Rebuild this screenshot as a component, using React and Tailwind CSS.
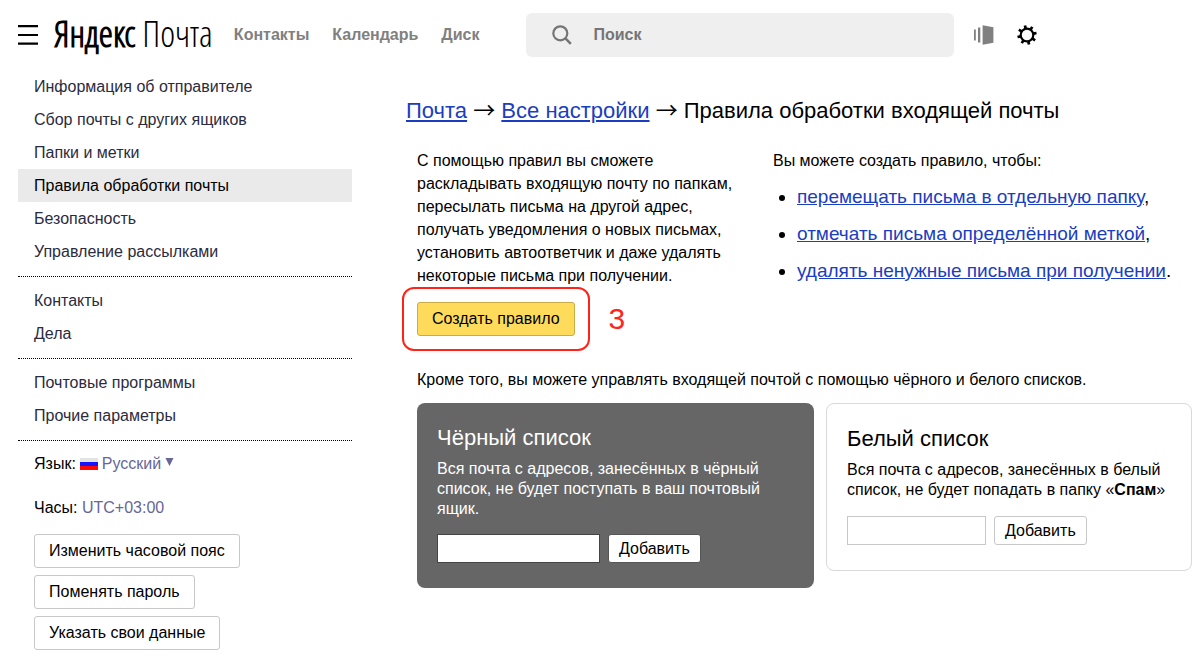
import React from "react";

const settingsLinks = [
  [
    { label: "Информация об отправителе" },
    { label: "Сбор почты с других ящиков" },
    { label: "Папки и метки" },
    { label: "Правила обработки почты", active: true },
    { label: "Безопасность" },
    { label: "Управление рассылками" },
  ],
  [{ label: "Контакты" }, { label: "Дела" }],
  [{ label: "Почтовые программы" }, { label: "Прочие параметры" }],
];

const ruleExamples = [
  { label: "перемещать письма в отдельную папку", end: "," },
  { label: "отмечать письма определённой меткой", end: "," },
  { label: "удалять ненужные письма при получении", end: "." },
];

const accountActions = ["Изменить часовой пояс", "Поменять пароль", "Указать свои данные"];

const gearTeeth = [-12, 33, 78, 123, 168, 213, 258, 303];

function Header() {
  return (
    <header className="flex h-[70px] items-center pl-[18px]">
      <button type="button" aria-label="Меню" className="mr-4 shrink-0">
        <svg width="20" height="22" viewBox="0 0 20 22" fill="none" stroke="#000" strokeWidth="2.2">
          <path d="M0 2.2h20M0 11h20M0 19.6h20" />
        </svg>
      </button>
      <a
        href="#"
        className="shrink-0 whitespace-nowrap pb-0.5 font-['Open_Sans_Condensed_Light','Roboto_Condensed',sans-serif] text-[36px] leading-[44px] text-black"
      >
        <span className="font-bold">Яндекс</span> <span className="font-light">Почта</span>
      </a>
      <nav className="ml-[21px] flex shrink-0 gap-[23px] text-base font-bold text-[#808080]">
        <a href="#">Контакты</a>
        <a href="#">Календарь</a>
        <a href="#">Диск</a>
      </nav>
      <label className="ml-[46px] flex h-11 max-w-[428px] flex-1 items-center rounded-md bg-[#efefef] pl-[26px]">
        <svg width="20" height="20" viewBox="0 0 20 20" fill="none" stroke="#757575" strokeWidth="2.2">
          <circle cx="8.3" cy="8.3" r="7" />
          <path d="M13.2 13.2l5.6 5.6" strokeWidth="2.6" />
        </svg>
        <input
          type="search"
          aria-label="Поиск"
          placeholder="Поиск"
          className="ml-[22px] min-w-0 flex-1 bg-transparent text-base font-bold outline-none placeholder:text-[#757575]"
        />
      </label>
      <button type="button" aria-label="Вид" className="ml-5 shrink-0">
        <svg width="20" height="20" viewBox="0 0 20 20" fill="#808080">
          <path d="M0 4.5h1.8v11H0zM4 2.5h2.3v15H4zM8.6 .3l10.8 2v15.4L8.6 19.7z" />
        </svg>
      </button>
      <button type="button" aria-label="Настройки" className="ml-[23px] shrink-0">
        <svg width="20" height="20" viewBox="-10 -10 20 20" fill="none" stroke="#000">
          <circle r="6.3" strokeWidth="2.2" />
          <g strokeWidth="2.7">
            {gearTeeth.map((angle) => (
              <path key={angle} d="M0 -6.6V-9.7" transform={`rotate(${angle})`} />
            ))}
          </g>
        </svg>
      </button>
    </header>
  );
}

function Sidebar() {
  return (
    <aside className="w-[334px] shrink-0">
      {settingsLinks.map((group, index) => (
        <ul key={index} className="mb-[7px] border-b border-dotted border-black pb-2">
          {group.map((item) => (
            <li key={item.label}>
              <a
                href="#"
                className={
                  item.active
                    ? "block bg-[#eaeaea] px-4 text-base leading-[33px] text-black"
                    : "block px-4 text-base leading-[33px] text-[#2b2b40]"
                }
              >
                {item.label}
              </a>
            </li>
          ))}
        </ul>
      ))}
      <div className="px-4">
        <div className="flex h-8 items-center">
          <label htmlFor="language">Язык:</label>
          <svg className="mx-1" width="18" height="12" viewBox="0 0 18 12">
            <path d="M0 0h18v12H0z" fill="#e3e3e3" />
            <path d="M0 4h18v4H0z" fill="#1414ff" />
            <path d="M0 8h18v4H0z" fill="#ff0808" />
          </svg>
          <select id="language" className="field-sizing-content appearance-none bg-transparent text-[#669] outline-none">
            <option>Русский</option>
          </select>
          <svg className="mb-1 ml-1" width="9" height="8" viewBox="0 0 9 8">
            <path d="M.5 0h8L4.5 8z" fill="#669" />
          </svg>
        </div>
        <p className="mt-3 leading-8">
          Часы:{" "}
          <a href="#" className="text-[#669]">
            UTC+03:00
          </a>
        </p>
        <div className="mt-2.5 flex flex-col items-start gap-[7px]">
          {accountActions.map((label) => (
            <button key={label} type="button" className="h-[34px] rounded-[3px] border border-[#c8c8c8] bg-white px-3.5">
              {label}
            </button>
          ))}
        </div>
      </div>
    </aside>
  );
}

function Arrow() {
  return <span className="font-['Noto_Sans_CJK_JP',sans-serif] leading-none">→</span>;
}

function Intro() {
  return (
    <section className="flex flex-wrap gap-x-8 pl-[11px]">
      <div className="w-[324px]">
        <p className="leading-[23px]">
          С помощью правил вы сможете раскладывать входящую почту по папкам, пересылать письма на другой адрес, получать
          уведомления о новых письмах, установить автоответчик и даже удалять некоторые письма при получении.
        </p>
        <div className="mt-[15px] flex items-center gap-[34px]">
          <div className="relative">
            <button type="button" className="h-[34px] rounded-[3px] border border-[#c9ab47] bg-[#ffdb5c] px-3.5">
              Создать правило
            </button>
            <span className="pointer-events-none absolute -inset-[15px] rounded-xl border-2 border-[#ff2419]" />
          </div>
          <span className="text-[30px] leading-[34px] text-[#ff2419]">3</span>
        </div>
      </div>
      <div>
        <p className="leading-[23px]">Вы можете создать правило, чтобы:</p>
        <ul className="mt-1.5 list-disc pl-6 text-[19px] leading-[37px]">
          {ruleExamples.map((item) => (
            <li key={item.label}>
              <a href="#" className="text-[#1a3dc1] underline">
                {item.label}
              </a>
              {item.end}
            </li>
          ))}
        </ul>
      </div>
    </section>
  );
}

function BlackList() {
  return (
    <section className="w-[397px] rounded-lg bg-[#666] px-5 pt-5 pb-[25px] text-white">
      <h2 className="text-[22px] leading-[30px]">Чёрный список</h2>
      <label htmlFor="black" className="mt-1.5 block leading-5">
        Вся почта с адресов, занесённых в чёрный список, не будет поступать в ваш почтовый ящик.
      </label>
      <div className="mt-[15px] flex gap-2">
        <input id="black" type="email" className="h-[29px] w-[163px] border border-[#444] bg-white px-2 text-black" />
        <button type="button" className="h-[29px] rounded-[3px] border border-[#555] bg-white px-2.5 text-black">
          Добавить
        </button>
      </div>
    </section>
  );
}

function WhiteList() {
  return (
    <section className="w-[366px] rounded-lg border border-[#d9d9d9] px-5 pt-5 pb-[25px]">
      <h2 className="text-[22px] leading-[30px]">Белый список</h2>
      <label htmlFor="white" className="mt-1.5 block leading-5">
        Вся почта с адресов, занесённых в белый список, не будет попадать в папку «<b>Спам</b>»
      </label>
      <div className="mt-4 flex gap-2">
        <input id="white" type="email" className="h-[29px] w-[139px] border border-[#c8c8c8] bg-white px-2" />
        <button type="button" className="h-[29px] rounded-[3px] border border-[#c8c8c8] bg-white px-2.5">
          Добавить
        </button>
      </div>
    </section>
  );
}

export default function App() {
  return (
    <div className="bg-white font-['Liberation_Sans',Arial,sans-serif] text-base text-black">
      <Header />
      <div className="flex pl-[18px] pb-4">
        <Sidebar />
        <main className="ml-[54px] min-w-0 flex-1 pt-[26px]">
          <h1 className="mb-[23px] text-[22px] leading-[30px]">
            <a href="#" className="text-[#1a3dc1] underline">
              Почта
            </a>{" "}
            <Arrow />{" "}
            <a href="#" className="text-[#1a3dc1] underline">
              Все настройки
            </a>{" "}
            <Arrow /> Правила обработки входящей почты
          </h1>
          <Intro />
          <p className="mt-8 pl-[11px] leading-[23px]">
            Кроме того, вы можете управлять входящей почтой с помощью чёрного и белого списков.
          </p>
          <div className="mt-3 flex items-start gap-3 pl-[11px]">
            <BlackList />
            <WhiteList />
          </div>
        </main>
      </div>
    </div>
  );
}
